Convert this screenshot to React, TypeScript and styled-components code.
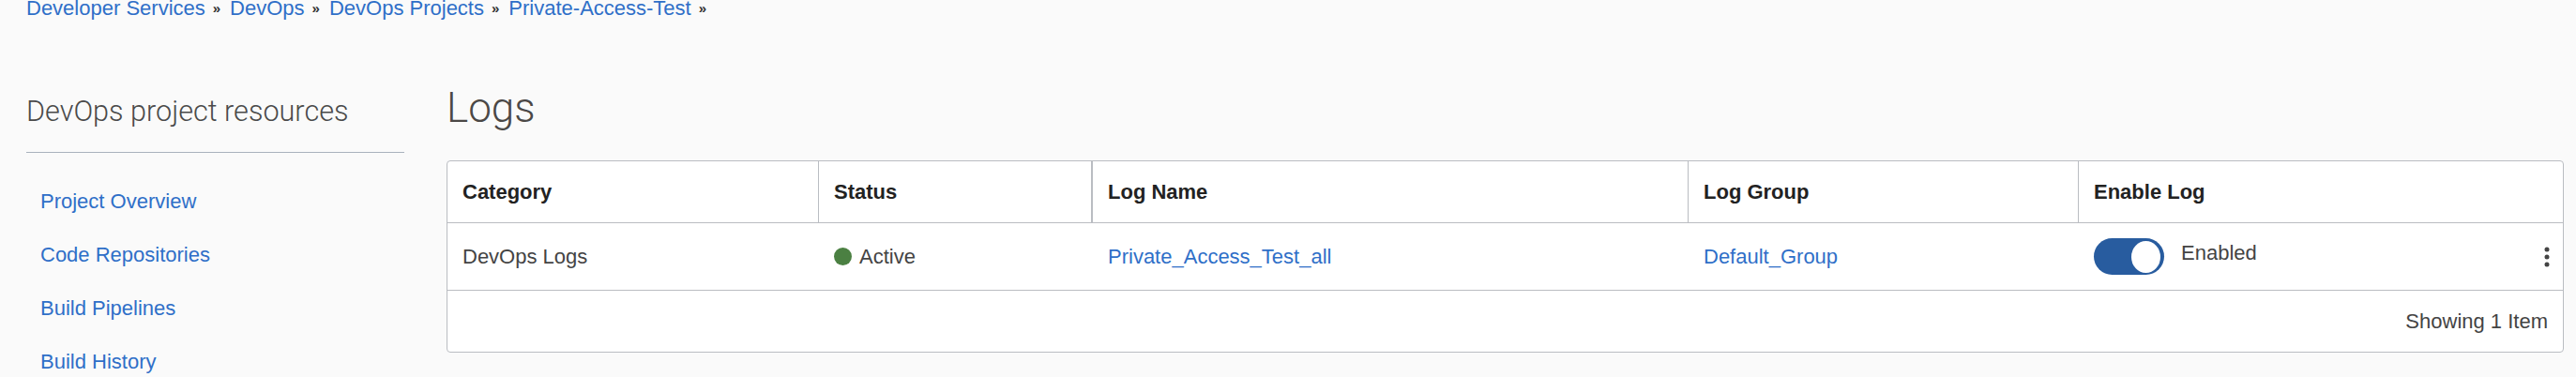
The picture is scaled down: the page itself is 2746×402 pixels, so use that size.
import React from "react";
import styled, { createGlobalStyle } from "styled-components";

const GlobalStyle = createGlobalStyle`
  html, body {
    margin: 0;
    padding: 0;
    background: #fafafa;
    overflow: hidden;
  }
  body {
    font-family: "Liberation Sans", Arial, Helvetica, sans-serif;
    color: #444;
  }
  * { box-sizing: border-box; }
`;

const LINK = "#2f6fc8";
const BORDER = "#babdc2";

const Breadcrumb = styled.nav`
  height: 18px;
  padding-left: 28px;
  font-size: 22px;
  line-height: 18px;
  white-space: nowrap;
`;

const Crumb = styled.a`
  color: ${LINK};
  text-decoration: none;
`;

const Sep = styled.span`
  display: inline-block;
  font-size: 15px;
  font-weight: bold;
  color: #333;
  margin: 0 10px 0 8px;
  vertical-align: 2px;
`;

const Layout = styled.div`
  display: flex;
  gap: 45px;
  padding: 0 13px 0 28px;
`;

const Sidebar = styled.aside`
  flex: none;
  width: 403px;
  padding-top: 83px;
`;

const SideTitle = styled.h2`
  margin: 0;
  font-family: Roboto, "Liberation Sans", sans-serif;
  font-weight: 300;
  font-size: 30.6px;
  line-height: 36px;
  color: #4a4a4a;
`;

const SideDivider = styled.hr`
  margin: 25px 0 23px;
  height: 0;
  border: 0;
  border-top: 1px solid #a9b2bd;
`;

const SideNav = styled.ul`
  list-style: none;
  margin: 0;
  padding: 0 0 0 15px;
`;

const SideLink = styled.a`
  display: block;
  font-size: 22px;
  line-height: 57px;
  color: ${LINK};
  text-decoration: none;
`;

const Content = styled.main`
  flex: 1;
  min-width: 0;
  padding-top: 71px;
`;

const Heading = styled.h1`
  margin: 0 0 30px;
  font-family: Roboto, "Liberation Sans", sans-serif;
  font-weight: 300;
  font-size: 44px;
  line-height: 52px;
  color: #4b4846;
`;

const Table = styled.div`
  background: #fff;
  border: 1px solid ${BORDER};
  border-radius: 4px;
  overflow: hidden;
`;

const COLS = "396px 292px 635px 416px 1fr";

const HeaderRow = styled.div`
  display: grid;
  grid-template-columns: ${COLS};
  height: 66px;
  border-bottom: 1px solid ${BORDER};
`;

const HeaderCell = styled.div<{ $divider?: number }>`
  display: flex;
  align-items: center;
  padding: 0 16px;
  font-size: 22px;
  font-weight: bold;
  color: #222;
  border-right: ${(p) => p.$divider ?? 0}px solid ${BORDER};
`;

const BodyRow = styled.div`
  display: grid;
  grid-template-columns: ${COLS};
  height: 72px;
  border-bottom: 1px solid ${BORDER};
`;

const BodyCell = styled.div`
  display: flex;
  align-items: center;
  padding: 0 16px;
  font-size: 22px;
  color: #444;
  white-space: nowrap;
`;

const ActionCell = styled(BodyCell)`
  padding-right: 14px;
`;

const CellLink = styled.a`
  color: ${LINK};
  text-decoration: none;
`;

const Dot = styled.span`
  width: 19px;
  height: 19px;
  border-radius: 50%;
  background: #4b8042;
  margin-right: 8px;
  flex: none;
`;

const Toggle = styled.span`
  display: flex;
  align-items: center;
  justify-content: flex-end;
  width: 75px;
  height: 39px;
  padding: 0 4px;
  border-radius: 20px;
  background: #285c9f;
  flex: none;
`;

const Knob = styled.span`
  width: 31px;
  height: 34px;
  border-radius: 50%;
  background: #fff;
`;

const ToggleLabel = styled.span`
  margin-left: 18px;
  padding-bottom: 8px;
`;

const Kebab = styled.button`
  margin-left: auto;
  border: 0;
  padding: 0;
  background: none;
  display: flex;
  color: #444;
`;

const Footer = styled.div`
  display: flex;
  align-items: center;
  justify-content: flex-end;
  height: 65px;
  padding-right: 16px;
  font-size: 22px;
  color: #444;
`;

const crumbs = ["Developer Services", "DevOps", "DevOps Projects", "Private-Access-Test"];
const links = ["Project Overview", "Code Repositories", "Build Pipelines", "Build History"];

export default function App() {
  return (
    <>
      <GlobalStyle />
      <Breadcrumb>
        {crumbs.map((c) => (
          <React.Fragment key={c}>
            <Crumb href="#">{c}</Crumb>
            <Sep>»</Sep>
          </React.Fragment>
        ))}
      </Breadcrumb>
      <Layout>
        <Sidebar>
          <SideTitle>DevOps project resources</SideTitle>
          <SideDivider />
          <SideNav>
            {links.map((l) => (
              <li key={l}>
                <SideLink href="#">{l}</SideLink>
              </li>
            ))}
          </SideNav>
        </Sidebar>
        <Content>
          <Heading>Logs</Heading>
          <Table>
            <HeaderRow>
              <HeaderCell $divider={1}>Category</HeaderCell>
              <HeaderCell $divider={2}>Status</HeaderCell>
              <HeaderCell $divider={1}>Log Name</HeaderCell>
              <HeaderCell $divider={1}>Log Group</HeaderCell>
              <HeaderCell>Enable Log</HeaderCell>
            </HeaderRow>
            <BodyRow>
              <BodyCell>DevOps Logs</BodyCell>
              <BodyCell>
                <Dot />
                Active
              </BodyCell>
              <BodyCell>
                <CellLink href="#">Private_Access_Test_all</CellLink>
              </BodyCell>
              <BodyCell>
                <CellLink href="#">Default_Group</CellLink>
              </BodyCell>
              <ActionCell>
                <Toggle>
                  <Knob />
                </Toggle>
                <ToggleLabel>Enabled</ToggleLabel>
                <Kebab aria-label="Actions">
                  <svg width="6" height="24" viewBox="0 0 6 24">
                    <circle cx="3" cy="4" r="2.5" fill="currentColor" />
                    <circle cx="3" cy="12" r="2.5" fill="currentColor" />
                    <circle cx="3" cy="20" r="2.5" fill="currentColor" />
                  </svg>
                </Kebab>
              </ActionCell>
            </BodyRow>
            <Footer>Showing 1 Item</Footer>
          </Table>
        </Content>
      </Layout>
    </>
  );
}
